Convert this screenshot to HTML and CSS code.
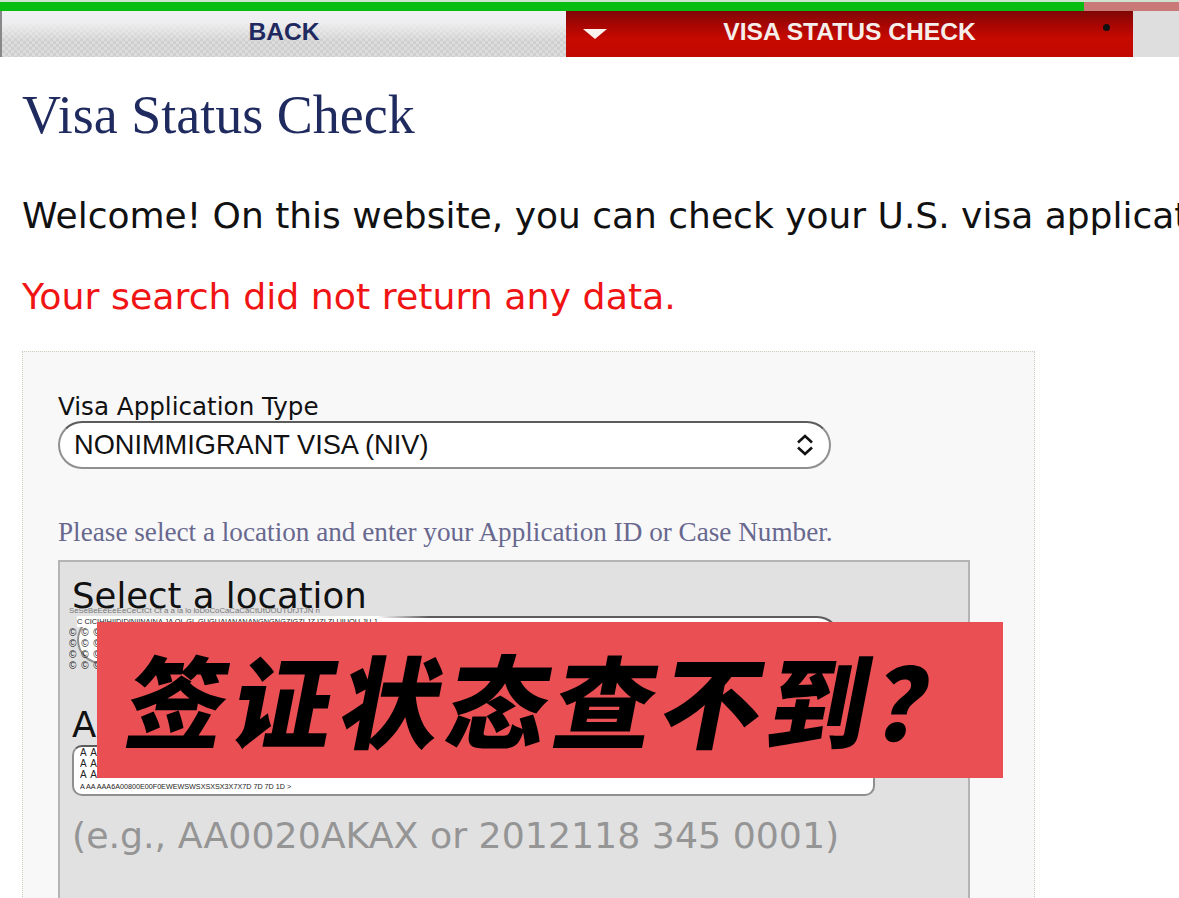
FILE: index.html
```html
<!DOCTYPE html>
<html lang="zh">
<head>
  <meta charset="UTF-8">
  <meta name="viewport" content="width=device-width, initial-scale=1.0">
  <title>Visa Status Check</title>
  <link rel="stylesheet" href="styles.css">
</head>
<body>
  <div class="progress">
    <div class="progress-done"></div>
    <div class="progress-rest"></div>
  </div>
  <nav class="nav">
    <a class="nav-back">BACK</a>
    <a class="nav-current">
      <span class="nav-arrow"></span>
      <span class="nav-label">VISA STATUS CHECK</span>
      <span class="nav-dot"></span>
    </a>
    <div class="nav-rest"></div>
  </nav>
  <main class="content">
    <h1>Visa Status Check</h1>
    <p class="welcome">Welcome! On this website, you can check your U.S. visa application status.</p>
    <p class="error">Your search did not return any data.</p>
    <section class="panel">
      <label class="type-label">Visa Application Type</label>
      <div class="select type-select">
        <span>NONIMMIGRANT VISA (NIV)</span>
        <svg class="updown" width="20" height="22" viewBox="0 0 20 22"><path d="M3 8.5 10 2l7 6.5M3 13.5 10 20l7-6.5" fill="none" stroke="#111" stroke-width="2.6"/></svg>
      </div>
      <p class="hint">Please select a location and enter your Application ID or Case Number.</p>
      <div class="inset">
        <label class="big-label">Select a location</label>
        <div class="select location-select">
          <div class="smear">
            <div class="smear-row smear-grey">SeSeBeEeEeEeCeCtCt Ct a a la lo loDoCoCaCaCaCtUtUOUTUrJTJN n</div>
            <div class="smear-row smear-white">C CICIHIHIIDIDINIINAINA JA OL GL GUGUAIANANANGNGNGZIGZI JZ IZI ZI UIUOU JU J</div>
            <div class="smear-row smear-marks">© © ©</div>
            <div class="smear-row smear-marks">© © ©</div>
            <div class="smear-row smear-marks">© © ©</div>
            <div class="smear-row smear-marks">© © ©</div>
          </div>
        </div>
        <label class="big-label app-label">Application ID or Case Number</label>
        <div class="select app-input">
          <div class="smear smear-app">
            <div class="smear-row smear-marks">A A</div>
            <div class="smear-row smear-marks">A A</div>
            <div class="smear-row smear-marks">A A</div>
            <div class="smear-row smear-strip">A AA AAA6A00800E00F0EWEWSWSXSXSX3X7X7D 7D 7D 1D &gt;</div>
          </div>
        </div>
        <p class="example">(e.g., AA0020AKAX or 2012118 345 0001)</p>
      </div>
    </section>
  </main>
  <div class="banner"><span class="banner-text">签证状态查不到？</span></div>
</body>
</html>
```

FILE: styles.css
```css
html, body {
  margin: 0;
  height: 898px;
  overflow: hidden;
  background: #fff;
}
body {
  font-family: "DejaVu Sans", Verdana, sans-serif;
}

.progress {
  display: flex;
  height: 9px;
  border-top: 2px solid #cfe3cf;
}
.progress-done {
  width: 1084px;
  background: #08bd12;
}
.progress-rest {
  flex: 1;
  background: #c97a78;
}

.nav {
  display: flex;
  height: 46px;
  background: #dedede;
}
.nav-back {
  width: 566px;
  box-sizing: border-box;
  border-left: 2px solid #888;
  padding-bottom: 5px;
  display: flex;
  align-items: center;
  justify-content: center;
  font: bold 24.6px "Liberation Sans", Arial, sans-serif;
  color: #20295f;
  background:
    linear-gradient(#f1f1f3 0, rgba(240, 240, 242, 0.9) 12px, rgba(230, 230, 230, 0) 30px),
    repeating-conic-gradient(#cfcfcf 0 25%, #dcdcdc 0 50%) 0 0 / 6px 6px;
}
.nav-current {
  width: 567px;
  box-sizing: border-box;
  padding-bottom: 5px;
  display: flex;
  align-items: center;
  justify-content: center;
  position: relative;
  font: bold 24.6px "Liberation Sans", Arial, sans-serif;
  color: #f6eeea;
  background: linear-gradient(#7f0705 0, #a80603 14px, #c60a00 28px, #c00800 100%);
}
.nav-arrow {
  position: absolute;
  left: 17px;
  top: 18px;
  border-left: 12px solid transparent;
  border-right: 12px solid transparent;
  border-top: 10px solid #fbf3ee;
}
.nav-dot {
  position: absolute;
  left: 537px;
  top: 13px;
  width: 7px;
  height: 7px;
  border-radius: 50%;
  background: #111;
}
.nav-rest {
  flex: 1;
}

.content {
  padding: 0 0 0 22px;
}
h1 {
  margin: 27px 0 0;
  font: normal 54px/62px "Liberation Serif", "Times New Roman", serif;
  color: #1f2a5e;
}
.welcome {
  margin: 48px 0 0;
  font-size: 36px;
  line-height: 44px;
  color: #111;
  white-space: nowrap;
}
.error {
  margin: 37px 0 0;
  font-size: 36.3px;
  line-height: 44px;
  color: #f01414;
}

.panel {
  width: 1013px;
  height: 600px;
  margin-top: 32px;
  box-sizing: border-box;
  padding: 40px 0 0 35px;
  background: #f8f8f9;
  border: 1px dotted #c9cbbd;
}
.type-label {
  display: block;
  font-size: 24.6px;
  line-height: 29px;
  color: #111;
}
.select {
  position: relative;
  box-sizing: border-box;
  background: #fff;
  border: 2px solid #8f8f8f;
  border-top-color: #5c5c5c;
}
.type-select {
  width: 773px;
  height: 48px;
  border-radius: 24px;
  padding: 0 14px;
  display: flex;
  align-items: center;
  justify-content: space-between;
  font: 27.2px "Liberation Sans", Arial, sans-serif;
  color: #111;
}
.updown {
  flex: none;
}
.hint {
  margin: 47px 0 0;
  font: 27.2px/32px "Liberation Serif", "Times New Roman", serif;
  color: #68688f;
  white-space: nowrap;
}
.inset {
  width: 912px;
  height: 500px;
  margin-top: 12px;
  box-sizing: border-box;
  padding: 14px 0 0 12px;
  background: #e1e1e2;
  border: 2px solid #b4b4b4;
}
.big-label {
  display: block;
  font-size: 35.5px;
  line-height: 40px;
  color: #111;
  white-space: nowrap;
}
.location-select {
  width: 764px;
  height: 48px;
  margin-left: 5px;
  border-radius: 24px;
}
.app-label {
  margin-top: 41px;
}
.app-input {
  width: 803px;
  height: 51px;
  border-radius: 10px;
}
.smear {
  position: absolute;
  left: -10px;
  top: -13px;
  width: 360px;
  font: 8.5px/11px "Liberation Sans", Arial, sans-serif;
  color: #222;
  white-space: nowrap;
}
.smear-app {
  left: 6px;
  top: 0;
  width: 240px;
}
.smear-row {
  height: 11px;
  overflow: hidden;
}
.smear-grey {
  font-size: 7.8px;
  color: #777;
}
.smear-white {
  font-size: 7.4px;
  background: linear-gradient(90deg, #fff 85%, rgba(255, 255, 255, 0));
  margin-left: 8px;
}
.smear-marks {
  font-size: 10px;
  letter-spacing: 1px;
}
.smear-strip {
  margin-top: 1px;
  font-size: 7.2px;
}
.example {
  margin: 18px 0 0;
  font-size: 36.3px;
  line-height: 44px;
  color: #959595;
  white-space: nowrap;
}

.banner {
  position: absolute;
  left: 97px;
  top: 622px;
  width: 906px;
  height: 156px;
  box-sizing: border-box;
  padding: 0 0 4px 32px;
  display: flex;
  align-items: center;
  background: #ea4f53;
}
.banner-text {
  color: #000;
  font: 900 100px/1 "Noto Sans CJK SC", sans-serif;
  letter-spacing: 7px;
  white-space: nowrap;
  transform: skewX(-11deg);
}
```
